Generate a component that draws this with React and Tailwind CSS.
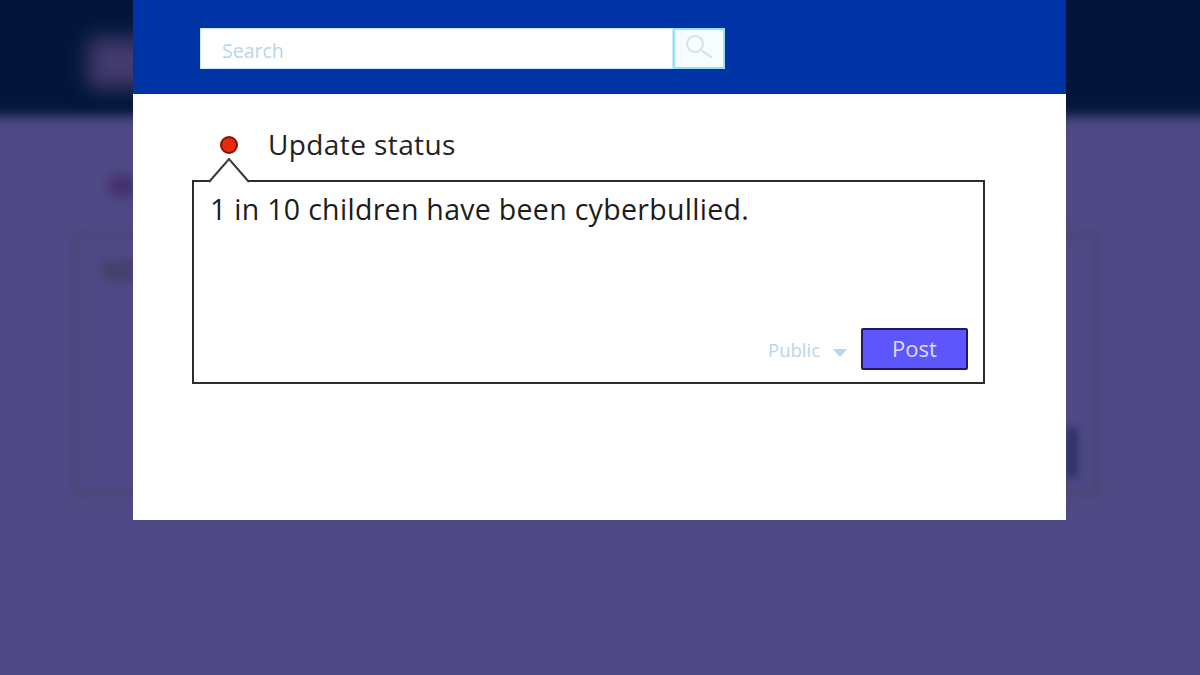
export default function App() {
  return (
    <div className="relative h-[675px] w-[1200px] overflow-hidden bg-[#4f4a86] font-['Open_Sans',sans-serif]">
      {/* blurred page behind the dialog */}
      <div className="absolute inset-0">
        <div className="absolute -left-4 -top-4 h-[132px] w-[1232px] bg-[#03163a] blur-[6px]" />
        <div className="absolute left-[88px] top-[38px] h-[50px] w-[70px] rounded bg-[#433a6e] blur-[10px]" />
        <div className="absolute left-[108px] top-[174px] h-[24px] w-[28px] rounded-full bg-[#43306c] blur-[6px]" />
        <div className="absolute left-[72px] top-[232px] h-[264px] w-[1026px] border-[5px] border-[#484471] blur-[4px]" />
        <div className="absolute left-[102px] top-[260px] h-[22px] w-[34px] bg-[#45406f] blur-[5px]" />
        <div className="absolute left-[1066px] top-[428px] h-[50px] w-[12px] bg-[#2f2f66] blur-[4px]" />
      </div>

      <div className="relative ml-[133px] h-[520px] w-[933px] bg-white">
        <div className="flex h-[94px] items-start bg-[#0033a5] pl-[67px] pt-[28px]">
          <div className="flex h-[41px] w-[473px] items-center border border-[#cfe6fb] bg-white pl-[21px] pt-[4px] text-[19.5px] text-[#b4d6f0]">
            Search
          </div>
          <div className="flex h-[41px] w-[52px] items-center justify-center border-2 border-[#8fe6f2] bg-[#f7fcfd] pb-[2px]">
            <svg width="30" height="28" viewBox="0 0 30 28" fill="none" stroke="#dbe3e8" strokeWidth="2.2">
              <circle cx="11" cy="10" r="8" />
              <path d="M17 16l10 7" strokeLinecap="round" />
            </svg>
          </div>
        </div>

        <div className="ml-[59px] w-[793px] pt-[32px]">
          <div className="flex h-[38px] items-center">
            <div className="ml-[28px] h-[18px] w-[18px] rounded-full border-2 border-[#7c1408] bg-[#ea2a0c]" />
            <div className="ml-[30px] -mt-[2px] text-[28px] font-medium leading-[38px] tracking-[0.4px] text-[#222222]">Update status</div>
          </div>
          <div className="relative mt-[16px] flex h-[204px] flex-col justify-between border-2 border-[#2c2c2c] bg-white pb-[12px] pl-[16px] pr-[15px] pt-[10px]">
            <svg className="absolute -top-[25px] left-[13px]" width="44" height="27" viewBox="0 0 44 27" fill="none">
              <path d="M1 26 L22 2 L43 26" fill="white" />
              <path d="M2 25 L22 2 L42 25" stroke="#3a3a3a" strokeWidth="2" />
            </svg>
            <div className="text-[28.5px] font-medium leading-[34px] tracking-[0.3px] text-[#1c1c1c]">1 in 10 children have been cyberbullied.</div>
            <div className="flex items-center justify-end">
              <span className="mt-[2px] text-[18.5px] text-[#b4d6f0]">Public</span>
              <svg className="ml-[13px] mt-[7px]" width="14" height="8" viewBox="0 0 14 8">
                <path d="M0 0h14L7 8z" fill="#b4d6f0" />
              </svg>
              <div className="ml-[14px] flex h-[42px] w-[107px] items-center justify-center rounded-[2px] border-2 border-[#1b1a66] bg-[#5c56fb] pb-[2px] text-[22px] font-medium text-[#dcdcfb]">
                Post
              </div>
            </div>
          </div>
        </div>
      </div>
    </div>
  );
}
